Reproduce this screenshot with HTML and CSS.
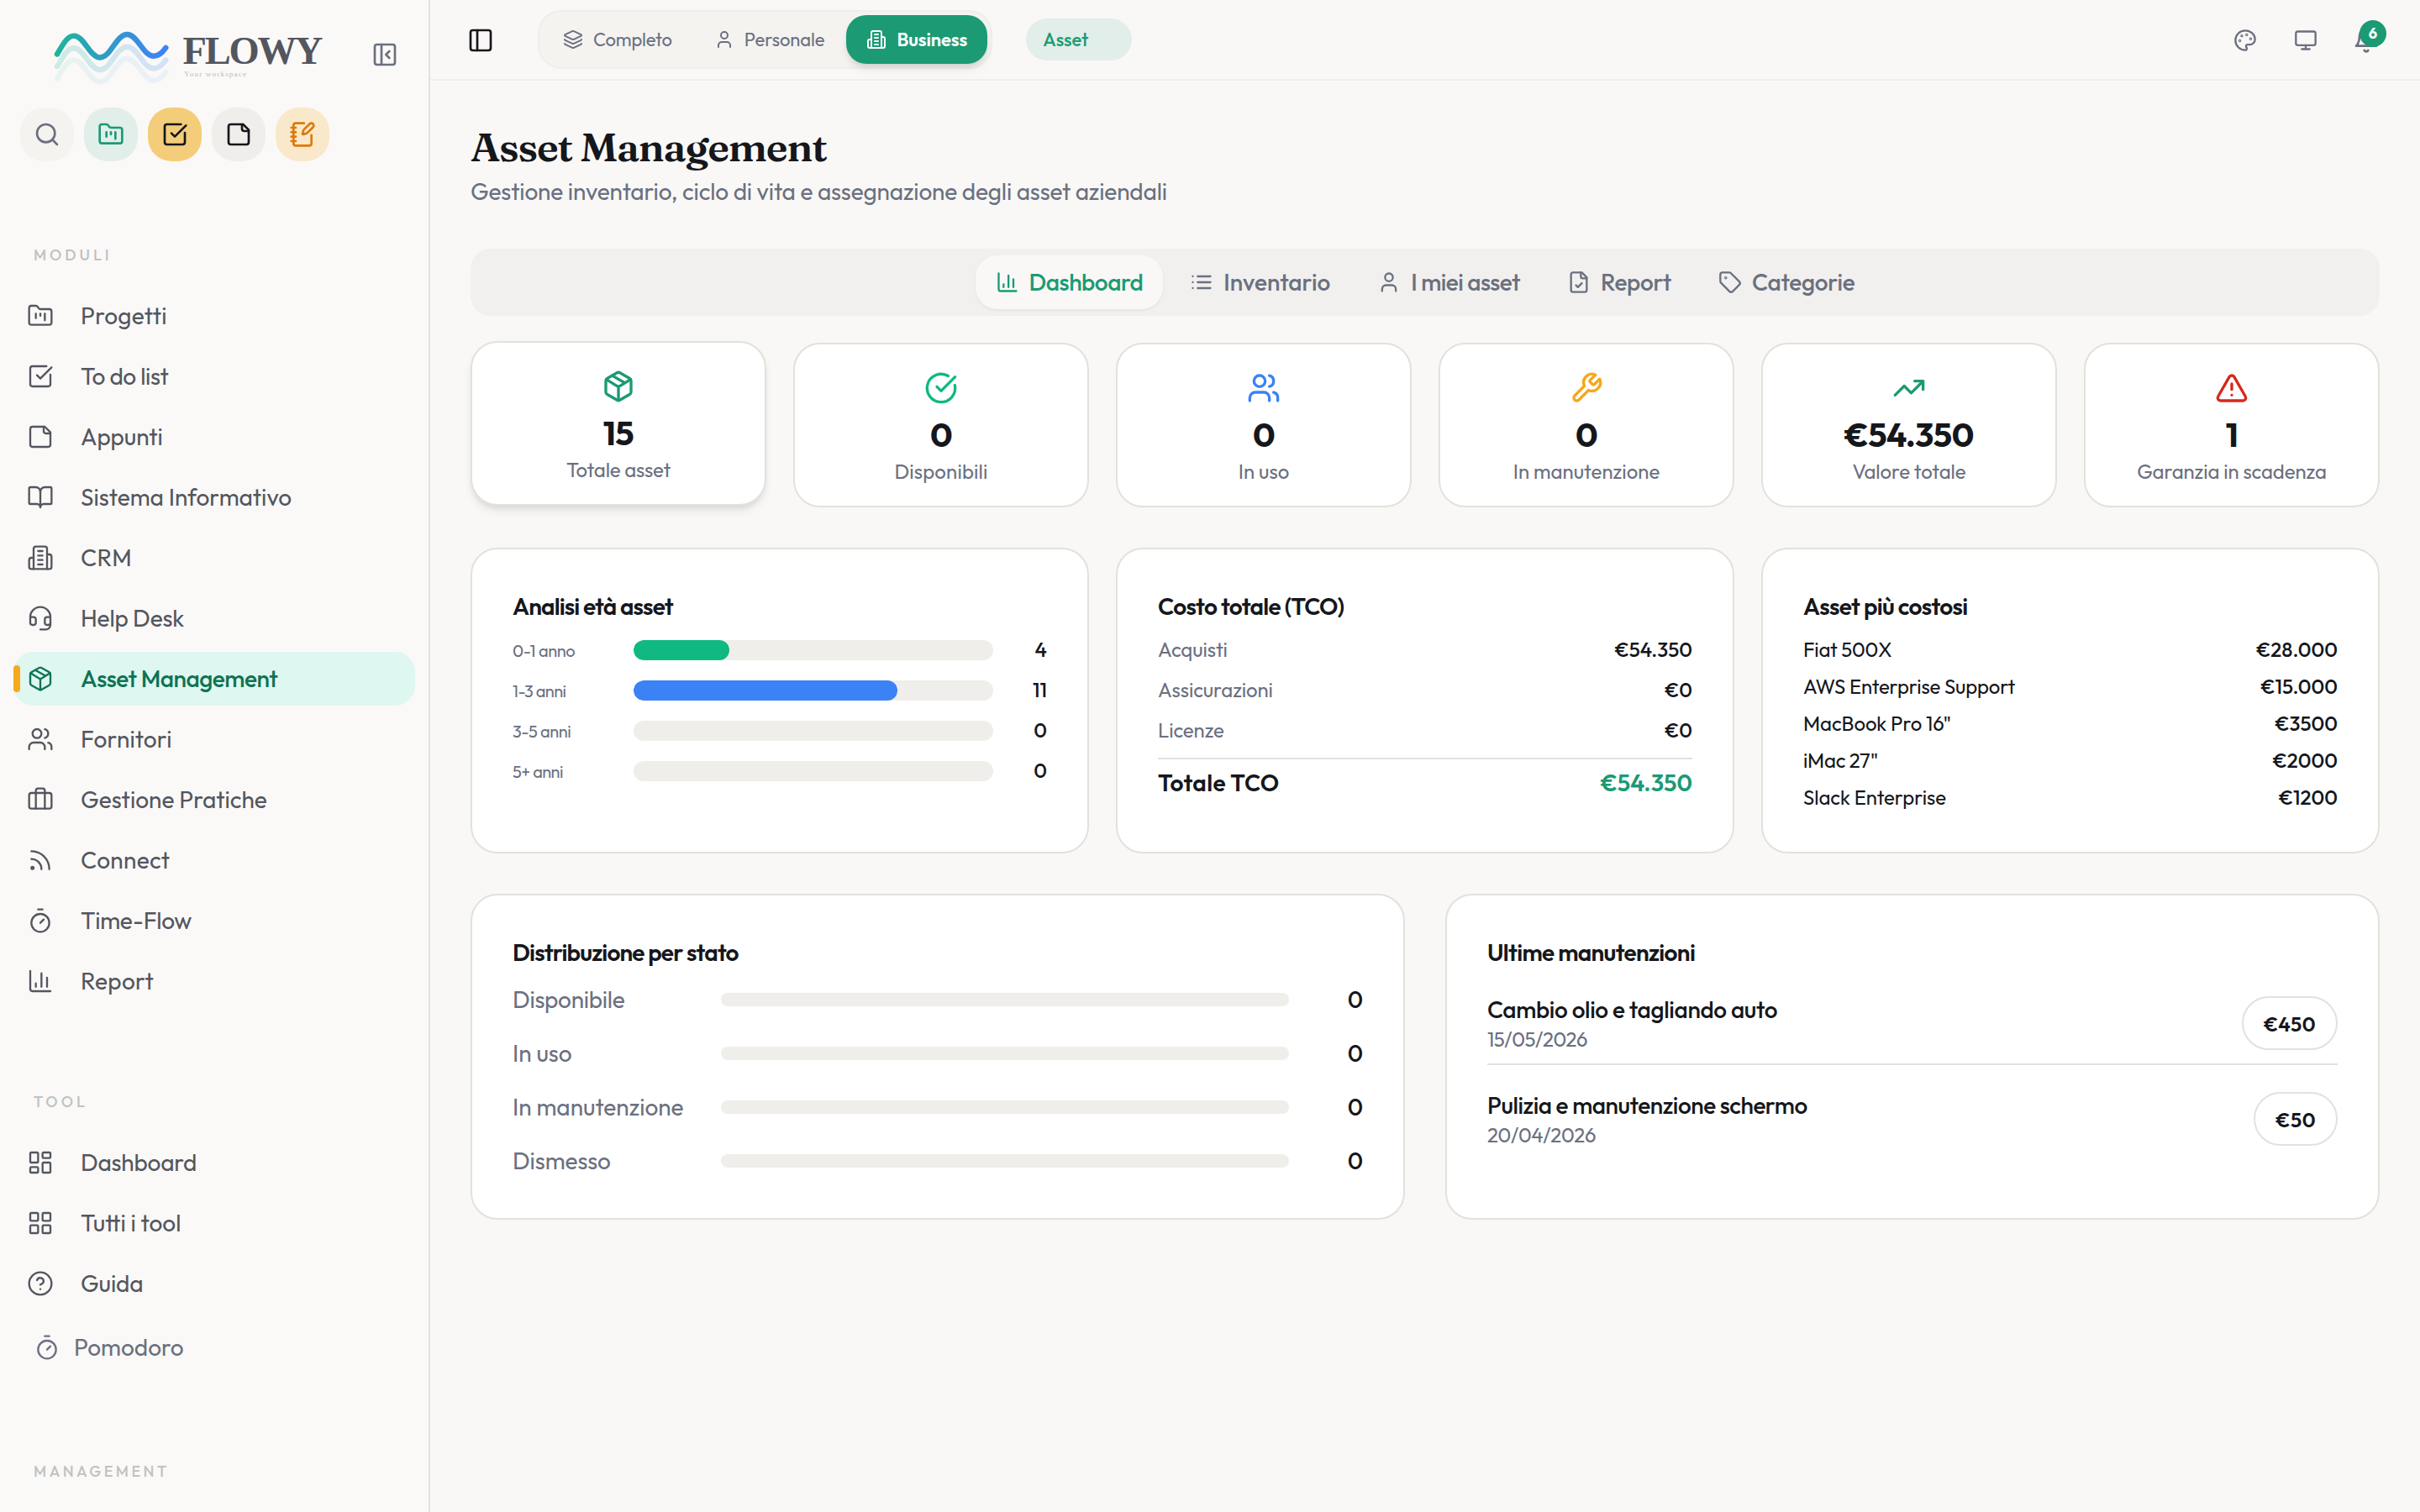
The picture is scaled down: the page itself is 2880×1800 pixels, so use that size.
FILE: index.html
```html
<!DOCTYPE html>
<html lang="it">
<head>
<meta charset="utf-8">
<title>Flowy – Asset Management</title>
<link rel="stylesheet" href="styles.css">
</head>
<body>
<svg class="sprite" aria-hidden="true">
  <symbol id="folder" viewBox="0 0 24 24"><path d="M4 20h16a2 2 0 0 0 2-2V8a2 2 0 0 0-2-2h-7.93a2 2 0 0 1-1.66-.9l-.82-1.2A2 2 0 0 0 7.93 3H4a2 2 0 0 0-2 2v13c0 1.1.9 2 2 2Z"/><path d="M8 10v4M12 10v2M16 10v6"/></symbol>
  <symbol id="check-square" viewBox="0 0 24 24"><path d="M21 10.5V19a2 2 0 0 1-2 2H5a2 2 0 0 1-2-2V5a2 2 0 0 1 2-2h12.5"/><path d="m9 11 3 3L22 4"/></symbol>
  <symbol id="note" viewBox="0 0 24 24"><path d="M16 3H5a2 2 0 0 0-2 2v14a2 2 0 0 0 2 2h14a2 2 0 0 0 2-2V8Z"/><path d="M15 3v4a2 2 0 0 0 2 2h4"/></symbol>
  <symbol id="book" viewBox="0 0 24 24"><path d="M12 7v14"/><path d="M3 18a1 1 0 0 1-1-1V4a1 1 0 0 1 1-1h5a4 4 0 0 1 4 4 4 4 0 0 1 4-4h5a1 1 0 0 1 1 1v13a1 1 0 0 1-1 1h-6a3 3 0 0 0-3 3 3 3 0 0 0-3-3z"/></symbol>
  <symbol id="building" viewBox="0 0 24 24"><path d="M6 22V4a2 2 0 0 1 2-2h8a2 2 0 0 1 2 2v18Z"/><path d="M6 12H4a2 2 0 0 0-2 2v6a2 2 0 0 0 2 2h2M18 9h2a2 2 0 0 1 2 2v9a2 2 0 0 1-2 2h-2M10 6h4M10 10h4M10 14h4M10 18h4"/></symbol>
  <symbol id="headset" viewBox="0 0 24 24"><path d="M3 11h3a2 2 0 0 1 2 2v3a2 2 0 0 1-2 2H5a2 2 0 0 1-2-2v-5Zm0 0a9 9 0 1 1 18 0m0 0v5a2 2 0 0 1-2 2h-1a2 2 0 0 1-2-2v-3a2 2 0 0 1 2-2h3Z"/><path d="M21 16v2a4 4 0 0 1-4 4h-5"/></symbol>
  <symbol id="package" viewBox="0 0 24 24"><path d="M11 21.73a2 2 0 0 0 2 0l7-4A2 2 0 0 0 21 16V8a2 2 0 0 0-1-1.73l-7-4a2 2 0 0 0-2 0l-7 4A2 2 0 0 0 3 8v8a2 2 0 0 0 1 1.73z"/><path d="M12 22V12M3.3 7l7.703 4.734a2 2 0 0 0 1.994 0L20.7 7M7.5 4.27l9 5.15"/></symbol>
  <symbol id="users" viewBox="0 0 24 24"><path d="M16 21v-2a4 4 0 0 0-4-4H6a4 4 0 0 0-4 4v2"/><circle cx="9" cy="7" r="4"/><path d="M22 21v-2a4 4 0 0 0-3-3.87M16 3.13a4 4 0 0 1 0 7.75"/></symbol>
  <symbol id="briefcase" viewBox="0 0 24 24"><path d="M16 20V4a2 2 0 0 0-2-2h-4a2 2 0 0 0-2 2v16"/><rect x="2" y="6" width="20" height="14" rx="2"/></symbol>
  <symbol id="rss" viewBox="0 0 24 24"><path d="M4 11a9 9 0 0 1 9 9M4 4a16 16 0 0 1 16 16"/><circle cx="5" cy="19" r="1"/></symbol>
  <symbol id="timer" viewBox="0 0 24 24"><path d="M10 2h4M12 14l3-3"/><circle cx="12" cy="14" r="8"/></symbol>
  <symbol id="chart" viewBox="0 0 24 24"><path d="M3 3v16a2 2 0 0 0 2 2h16M18 17V9M13 17V5M8 17v-3"/></symbol>
  <symbol id="dashboard" viewBox="0 0 24 24"><rect x="3" y="3" width="7" height="9" rx="1"/><rect x="14" y="3" width="7" height="5" rx="1"/><rect x="14" y="12" width="7" height="9" rx="1"/><rect x="3" y="16" width="7" height="5" rx="1"/></symbol>
  <symbol id="grid" viewBox="0 0 24 24"><rect x="3" y="3" width="7" height="7" rx="1"/><rect x="14" y="3" width="7" height="7" rx="1"/><rect x="14" y="14" width="7" height="7" rx="1"/><rect x="3" y="14" width="7" height="7" rx="1"/></symbol>
  <symbol id="help" viewBox="0 0 24 24"><circle cx="12" cy="12" r="10"/><path d="M9.09 9a3 3 0 0 1 5.83 1c0 2-3 3-3 3M12 17h.01"/></symbol>
  <symbol id="search" viewBox="0 0 24 24"><circle cx="11" cy="11" r="8"/><path d="m21 21-4.3-4.3"/></symbol>
  <symbol id="notebook" viewBox="0 0 24 24"><path d="M13.4 2H6a2 2 0 0 0-2 2v16a2 2 0 0 0 2 2h12a2 2 0 0 0 2-2v-7.4M2 6h4M2 10h4M2 14h4M2 18h4"/><path d="M21.378 5.626a1 1 0 1 0-3.004-3.004l-5.01 5.012a2 2 0 0 0-.506.854l-.837 2.87a.5.5 0 0 0 .62.62l2.87-.837a2 2 0 0 0 .854-.506z"/></symbol>
  <symbol id="panel-close" viewBox="0 0 24 24"><rect x="3" y="3" width="18" height="18" rx="2"/><path d="M9 3v18M16 15l-3-3 3-3"/></symbol>
  <symbol id="panel" viewBox="0 0 24 24"><rect x="3" y="3" width="18" height="18" rx="2"/><path d="M9 3v18"/></symbol>
  <symbol id="layers" viewBox="0 0 24 24"><path d="M12.83 2.18a2 2 0 0 0-1.66 0L2.6 6.08a1 1 0 0 0 0 1.83l8.58 3.91a2 2 0 0 0 1.66 0l8.58-3.9a1 1 0 0 0 0-1.83z"/><path d="M2 12a1 1 0 0 0 .58.91l8.6 3.91a2 2 0 0 0 1.65 0l8.58-3.9A1 1 0 0 0 22 12M2 17a1 1 0 0 0 .58.91l8.6 3.91a2 2 0 0 0 1.65 0l8.58-3.9A1 1 0 0 0 22 17"/></symbol>
  <symbol id="user" viewBox="0 0 24 24"><path d="M19 21v-2a4 4 0 0 0-4-4H9a4 4 0 0 0-4 4v2"/><circle cx="12" cy="7" r="4"/></symbol>
  <symbol id="palette" viewBox="0 0 24 24"><circle cx="13.5" cy="6.5" r=".5"/><circle cx="17.5" cy="10.5" r=".5"/><circle cx="8.5" cy="7.5" r=".5"/><circle cx="6.5" cy="12.5" r=".5"/><path d="M12 2C6.5 2 2 6.5 2 12s4.5 10 10 10c.926 0 1.648-.746 1.648-1.688 0-.437-.18-.835-.437-1.125-.29-.289-.438-.652-.438-1.125a1.64 1.64 0 0 1 1.668-1.668h1.996c3.051 0 5.555-2.503 5.555-5.554C21.965 6.012 17.461 2 12 2z"/></symbol>
  <symbol id="monitor" viewBox="0 0 24 24"><rect x="2" y="3" width="20" height="14" rx="2"/><path d="M8 21h8M12 17v4"/></symbol>
  <symbol id="bell" viewBox="0 0 24 24"><path d="M6 8a6 6 0 0 1 12 0c0 7 3 9 3 9H3s3-2 3-9M10.3 21a1.94 1.94 0 0 0 3.4 0"/></symbol>
  <symbol id="list" viewBox="0 0 24 24"><path d="M3 12h.01M3 18h.01M3 6h.01M8 12h13M8 18h13M8 6h13"/></symbol>
  <symbol id="file-check" viewBox="0 0 24 24"><path d="M15 2H6a2 2 0 0 0-2 2v16a2 2 0 0 0 2 2h12a2 2 0 0 0 2-2V7Z"/><path d="M14 2v4a2 2 0 0 0 2 2h4M9 15l2 2 4-4"/></symbol>
  <symbol id="tag" viewBox="0 0 24 24"><path d="M12.586 2.586A2 2 0 0 0 11.172 2H4a2 2 0 0 0-2 2v7.172a2 2 0 0 0 .586 1.414l8.704 8.704a2.426 2.426 0 0 0 3.42 0l6.58-6.58a2.426 2.426 0 0 0 0-3.42z"/><circle cx="7.5" cy="7.5" r=".5"/></symbol>
  <symbol id="check-circle" viewBox="0 0 24 24"><path d="M21.801 10A10 10 0 1 1 17 3.335"/><path d="m9 11 3 3L22 4"/></symbol>
  <symbol id="wrench" viewBox="0 0 24 24"><path d="M14.7 6.3a1 1 0 0 0 0 1.4l1.6 1.6a1 1 0 0 0 1.4 0l3.77-3.77a6 6 0 0 1-7.94 7.94l-6.91 6.91a2.12 2.12 0 0 1-3-3l6.91-6.91a6 6 0 0 1 7.94-7.94l-3.76 3.76z"/></symbol>
  <symbol id="trending" viewBox="0 0 24 24"><path d="M22 7l-8.5 8.5-5-5L2 17M16 7h6v6"/></symbol>
  <symbol id="alert" viewBox="0 0 24 24"><path d="m21.73 18-8-14a2 2 0 0 0-3.48 0l-8 14A2 2 0 0 0 4 21h16a2 2 0 0 0 1.73-3M12 9v4M12 17h.01"/></symbol>
</svg>

<div class="app">
  <aside class="sidebar">
    <div class="brand">
      <svg class="logo" viewBox="0 0 330 76" role="img" aria-label="Flowy">
        <defs>
          <linearGradient id="wave" gradientUnits="userSpaceOnUse" x1="4" y1="0" x2="140" y2="0">
            <stop offset="0" stop-color="#1fb59a"/><stop offset="1" stop-color="#4080fa"/>
          </linearGradient>
          <path id="wave-line" d="M8 32.5C15 21 20 10.6 28 10.6C40 10.6 47 36.5 59 36.5C72 36.5 78 9 91.5 9C104 9 110 34.8 123 34.8C129 34.8 134 29.5 137.3 24.8"/>
        </defs>
        <g class="waves">
          <use href="#wave-line" y="29" opacity=".08"/>
          <use href="#wave-line" y="14.7" opacity=".2"/>
          <use href="#wave-line"/>
        </g>
        <text class="logo-name" x="157.5" y="44">FLOWY</text>
        <text class="logo-tag" x="159" y="59">Your workspace</text>
      </svg>
      <svg class="icon i32"><use href="#panel-close"/></svg>
    </div>
    <div class="quick">
      <span class="quick-btn q-search"><svg class="icon i32"><use href="#search"/></svg></span>
      <span class="quick-btn q-projects"><svg class="icon i32"><use href="#folder"/></svg></span>
      <span class="quick-btn q-todo"><svg class="icon i32"><use href="#check-square"/></svg></span>
      <span class="quick-btn q-notes"><svg class="icon i32"><use href="#note"/></svg></span>
      <span class="quick-btn q-journal"><svg class="icon i32"><use href="#notebook"/></svg></span>
    </div>
    <div class="nav-label">MODULI</div>
    <nav class="nav">
      <a class="nav-item wide-2"><svg class="icon i32"><use href="#folder"/></svg><span>Progetti</span></a>
      <a class="nav-item tight-4"><svg class="icon i32"><use href="#check-square"/></svg><span>To do list</span></a>
      <a class="nav-item tight-1"><svg class="icon i32"><use href="#note"/></svg><span>Appunti</span></a>
      <a class="nav-item"><svg class="icon i32"><use href="#book"/></svg><span>Sistema Informativo</span></a>
      <a class="nav-item wide-3"><svg class="icon i32"><use href="#building"/></svg><span>CRM</span></a>
      <a class="nav-item tight-2"><svg class="icon i32"><use href="#headset"/></svg><span>Help Desk</span></a>
      <a class="nav-item active tight-5"><svg class="icon i32"><use href="#package"/></svg><span>Asset Management</span></a>
      <a class="nav-item wide-1"><svg class="icon i32"><use href="#users"/></svg><span>Fornitori</span></a>
      <a class="nav-item"><svg class="icon i32"><use href="#briefcase"/></svg><span>Gestione Pratiche</span></a>
      <a class="nav-item wide-3"><svg class="icon i32"><use href="#rss"/></svg><span>Connect</span></a>
      <a class="nav-item tight-3"><svg class="icon i32"><use href="#timer"/></svg><span>Time-Flow</span></a>
      <a class="nav-item wide-2"><svg class="icon i32"><use href="#chart"/></svg><span>Report</span></a>
    </nav>
    <div class="nav-label">TOOL</div>
    <nav class="nav">
      <a class="nav-item tight-2"><svg class="icon i32"><use href="#dashboard"/></svg><span>Dashboard</span></a>
      <a class="nav-item"><svg class="icon i32"><use href="#grid"/></svg><span>Tutti i tool</span></a>
      <a class="nav-item tight-1"><svg class="icon i32"><use href="#help"/></svg><span>Guida</span></a>
      <a class="nav-item compact"><svg class="icon i32"><use href="#timer"/></svg><span>Pomodoro</span></a>
    </nav>
    <div class="nav-label last">MANAGEMENT</div>
  </aside>

  <div class="page">
    <header class="topbar">
      <svg class="icon i32 toggle"><use href="#panel"/></svg>
      <div class="modes">
        <span class="mode tight-2"><svg class="icon i24"><use href="#layers"/></svg><span>Completo</span></span>
        <span class="mode tight-1"><svg class="icon i24"><use href="#user"/></svg><span>Personale</span></span>
        <span class="mode on tight-1"><svg class="icon i24"><use href="#building"/></svg><span>Business</span></span>
      </div>
      <span class="crumb">Asset</span>
      <div class="actions">
        <svg class="icon i28"><use href="#palette"/></svg>
        <svg class="icon i28"><use href="#monitor"/></svg>
        <span class="bell"><svg class="icon i32"><use href="#bell"/></svg><span class="badge">6</span></span>
      </div>
    </header>

    <main class="content">
      <h1>Asset Management</h1>
      <p class="subtitle">Gestione inventario, ciclo di vita e assegnazione degli asset aziendali</p>

      <div class="tabs">
        <span class="tab on tight-5"><svg class="icon i28"><use href="#chart"/></svg><span>Dashboard</span></span>
        <span class="tab"><svg class="icon i28"><use href="#list"/></svg><span>Inventario</span></span>
        <span class="tab tight-6"><svg class="icon i28"><use href="#user"/></svg><span>I miei asset</span></span>
        <span class="tab tight-3"><svg class="icon i28"><use href="#file-check"/></svg><span>Report</span></span>
        <span class="tab tight-3"><svg class="icon i28"><use href="#tag"/></svg><span>Categorie</span></span>
      </div>

      <section class="stats">
        <div class="stat raised"><svg class="icon i40 c-brand"><use href="#package"/></svg><strong>15</strong><span class="tight-2">Totale asset</span></div>
        <div class="stat"><svg class="icon i40 c-green"><use href="#check-circle"/></svg><strong>0</strong><span class="wide-1">Disponibili</span></div>
        <div class="stat"><svg class="icon i40 c-blue"><use href="#users"/></svg><strong>0</strong><span>In uso</span></div>
        <div class="stat"><svg class="icon i40 c-amber"><use href="#wrench"/></svg><strong>0</strong><span>In manutenzione</span></div>
        <div class="stat"><svg class="icon i40 c-brand"><use href="#trending"/></svg><strong>€54.350</strong><span class="tight-1">Valore totale</span></div>
        <div class="stat"><svg class="icon i40 c-red"><use href="#alert"/></svg><strong>1</strong><span class="tight-1">Garanzia in scadenza</span></div>
      </section>

      <section class="cards three">
        <div class="card">
          <h2 class="tighter">Analisi età asset</h2>
          <div class="age-row"><span class="label tight-4">0-1 anno</span><span class="track"><span class="fill f-green" style="width:26.67%"></span></span><b>4</b></div>
          <div class="age-row"><span class="label tight-6">1-3 anni</span><span class="track"><span class="fill f-blue" style="width:73.33%"></span></span><b>11</b></div>
          <div class="age-row"><span class="label tight-5">3-5 anni</span><span class="track"></span><b>0</b></div>
          <div class="age-row"><span class="label tight-6">5+ anni</span><span class="track"></span><b>0</b></div>
        </div>
        <div class="card">
          <h2>Costo totale (TCO)</h2>
          <div class="cost-row"><span>Acquisti</span><b>€54.350</b></div>
          <div class="cost-row"><span>Assicurazioni</span><b>€0</b></div>
          <div class="cost-row"><span>Licenze</span><b>€0</b></div>
          <div class="cost-total"><span class="wide-3">Totale TCO</span><b>€54.350</b></div>
        </div>
        <div class="card">
          <h2>Asset più costosi</h2>
          <div class="top-list">
            <div class="top-row"><span class="tight-3">Fiat 500X</span><b>€28.000</b></div>
            <div class="top-row"><span class="tight-2">AWS Enterprise Support</span><b>€15.000</b></div>
            <div class="top-row"><span class="tight-1">MacBook Pro 16"</span><b>€3500</b></div>
            <div class="top-row"><span class="tight-3">iMac 27"</span><b>€2000</b></div>
            <div class="top-row"><span class="tight-1">Slack Enterprise</span><b>€1200</b></div>
          </div>
        </div>
      </section>

      <section class="cards two">
        <div class="card">
          <h2 class="tighter">Distribuzione per stato</h2>
          <div class="state-list">
            <div class="state-row"><span class="label tight-3">Disponibile</span><span class="track"></span><b>0</b></div>
            <div class="state-row"><span class="label">In uso</span><span class="track"></span><b>0</b></div>
            <div class="state-row"><span class="label">In manutenzione</span><span class="track"></span><b>0</b></div>
            <div class="state-row"><span class="label tight-1">Dismesso</span><span class="track"></span><b>0</b></div>
          </div>
        </div>
        <div class="card">
          <h2>Ultime manutenzioni</h2>
          <div class="job"><div><p class="job-name tight-4">Cambio olio e tagliando auto</p><p class="job-date tight-5">15/05/2026</p></div><span class="price">€450</span></div>
          <div class="job"><div><p class="job-name tight-5">Pulizia e manutenzione schermo</p><p class="job-date tight-4">20/04/2026</p></div><span class="price">€50</span></div>
        </div>
      </section>
    </main>
  </div>
</div>
</body>
</html>
```
FILE: styles.css
```css
* { box-sizing: border-box; }

body {
  margin: 0;
  background: #f9f8f6;
  color: #15171c;
  font-family: Outfit, Lato, sans-serif;
  font-size: 28px;
  line-height: 40px;
}

h1, h2, p { margin: 0; }
a { color: inherit; text-decoration: none; }
b { font-weight: 500; }

/* Tracking steps */
.tight-1 { letter-spacing: -.1px; }
.tight-2 { letter-spacing: -.2px; }
.tight-3 { letter-spacing: -.28px; }
.tight-4 { letter-spacing: -.37px; }
.tight-5 { letter-spacing: -.48px; }
.tight-6 { letter-spacing: -.56px; }
.wide-1 { letter-spacing: .15px; }
.wide-2 { letter-spacing: .25px; }
.wide-3 { letter-spacing: .32px; }

.sprite { display: none; }

.icon {
  flex: none;
  display: block;
  fill: none;
  stroke: currentColor;
  stroke-width: 2;
  stroke-linecap: round;
  stroke-linejoin: round;
}
.i24 { width: 24px; height: 24px; }
.i28 { width: 28px; height: 28px; }
.i32 { width: 32px; height: 32px; }
.i40 { width: 40px; height: 40px; }

.c-brand { color: #1b9a74; }
.c-green { color: #10b981; }
.c-blue { color: #3b82f6; }
.c-amber { color: #f5a81c; }
.c-red { color: #d6281c; }

.app {
  display: flex;
  height: 1800px;
  overflow: hidden;
}

/* Sidebar */
.sidebar {
  flex: none;
  width: 512px;
  border-right: 2px solid #e3e1dc;
  background: #faf9f7;
  color: #53565f;
}

.brand {
  display: flex;
  align-items: center;
  justify-content: space-between;
  height: 128px;
  padding: 0 36px 0 60px;
  color: #6b7080;
}
.brand .icon { margin-top: 1px; }
.logo { width: 330px; height: 76px; margin-top: 12px; }
.waves {
  fill: none;
  stroke: url(#wave);
  stroke-width: 6.4;
  stroke-linecap: round;
}
.logo-name {
  font: 700 46.5px "Liberation Serif", serif;
  letter-spacing: -2.2px;
  fill: #53565f;
}
.logo-tag {
  font: 400 9px "Liberation Serif", serif;
  letter-spacing: 1.2px;
  fill: #bcbdc1;
}

.quick {
  display: flex;
  gap: 12px;
  padding-left: 24px;
}
.quick-btn {
  display: flex;
  align-items: center;
  justify-content: center;
  width: 64px;
  height: 64px;
  border-radius: 28px;
}
.q-search { background: #f4f3ef; color: #6b7080; }
.q-projects { background: #e1eee9; color: #1b9a74; }
.q-todo { background: #f4cd7a; color: #15171c; }
.q-notes { background: #efeeea; color: #15171c; }
.q-journal { background: #fae8cb; color: #dd7a07; }

.nav-label {
  margin: 96px 0 24px 40px;
  color: #bfc1c4;
  font-size: 18px;
  font-weight: 500;
  line-height: 32px;
  letter-spacing: 3.95px;
}
.nav-label.last { margin-top: 100px; letter-spacing: 3.5px; }

.nav {
  display: flex;
  flex-direction: column;
  gap: 8px;
  padding: 0 16px;
}
.nav-item {
  position: relative;
  display: flex;
  align-items: center;
  gap: 32px;
  height: 64px;
  padding-left: 16px;
  border-radius: 24px;
}
.nav-item .icon { stroke-width: 1.75; }
.nav-item.active {
  background: #def7f0;
  color: #0f7355;
  font-weight: 500;
}
.nav-item.active::before {
  content: "";
  position: absolute;
  left: 0;
  top: 16px;
  width: 8px;
  height: 32px;
  border-radius: 4px;
  background: #f6a91c;
}
.nav-item.compact {
  gap: 16px;
  margin-top: 4px;
  padding-left: 24px;
  color: #6b7080;
}

/* Top bar */
.page { flex: 1; min-width: 0; }

.topbar {
  display: flex;
  align-items: center;
  height: 96px;
  padding: 0 48px 0 44px;
  border-bottom: 2px solid #efeeea;
}
.toggle { margin: 2px 52px 0 0; }
.modes {
  display: flex;
  gap: 2px;
  padding: 4px;
  border: 2px solid #efeeea;
  border-radius: 28px;
  background: #f4f3f0;
}
.mode {
  display: flex;
  align-items: center;
  gap: 12px;
  height: 58px;
  padding: 0 24px;
  border-radius: 24px;
  color: #6b7080;
  font-size: 22px;
}
.mode.on {
  background: #1b9a74;
  color: #fff;
  font-weight: 600;
  box-shadow: 0 8px 12px -2px rgba(0, 0, 0, .08), 0 4px 6px -2px rgba(0, 0, 0, .1);
}
.crumb {
  width: 126px;
  height: 50px;
  margin-left: 40px;
  padding-left: 20px;
  border-radius: 25px;
  background: #e1eee9;
  color: #1b9a74;
  font-size: 22px;
  font-weight: 500;
  line-height: 50px;
}
.actions {
  display: flex;
  align-items: center;
  gap: 44px;
  margin: 2px 0 0 auto;
  color: #6b7080;
}
.bell { position: relative; margin-left: -2px; }
.badge {
  position: absolute;
  left: 8px;
  top: -8px;
  width: 32px;
  height: 32px;
  border-radius: 50%;
  background: #1b9a74;
  color: #fff;
  font-size: 18px;
  font-weight: 700;
  line-height: 31px;
  text-align: center;
}

/* Content */
.content { padding: 48px; }

h1 {
  font: 600 48px/62px Fraunces, "Liberation Serif", serif;
  letter-spacing: -1.15px;
}
.subtitle {
  margin-top: 2px;
  color: #6b7080;
  letter-spacing: -.155px;
}

.tabs {
  display: flex;
  justify-content: center;
  gap: 8px;
  height: 80px;
  margin-top: 48px;
  padding: 8px;
  border-radius: 24px;
  background: #f1f0ee;
}
.tab {
  display: flex;
  align-items: center;
  gap: 12px;
  padding: 0 24px;
  border-radius: 26px;
  color: #6b7080;
  font-weight: 500;
}
.tab.on {
  background: #f9f8f6;
  color: #1b9a74;
  box-shadow: 0 2px 4px rgba(0, 0, 0, .05);
}

.stats {
  display: grid;
  grid-template-columns: repeat(6, 1fr);
  gap: 32px;
  margin-top: 32px;
}
.stat {
  display: flex;
  flex-direction: column;
  align-items: center;
  height: 196px;
  padding-top: 32px;
  border: 2px solid #e3e1dc;
  border-radius: 32px;
  background: #fff;
}
.stat.raised {
  transform: translateY(-2px);
  box-shadow: 0 8px 12px -2px rgba(0, 0, 0, .08), 0 4px 6px -2px rgba(0, 0, 0, .08);
}
.stat strong {
  margin-top: 11px;
  font-size: 40px;
  font-weight: 700;
  line-height: 48px;
  letter-spacing: -.6px;
}
.stat span {
  margin-top: 4px;
  color: #6b7080;
  font-size: 24px;
  line-height: 32px;
}

.cards { display: grid; margin-top: 48px; }
.three { grid-template-columns: repeat(3, 1fr); gap: 32px; }
.two { grid-template-columns: repeat(2, 1fr); gap: 48px; }
.card {
  padding: 48px;
  border: 2px solid #e3e1dc;
  border-radius: 32px;
  background: #fff;
}
h2 {
  margin-bottom: 16px;
  font-size: 28px;
  font-weight: 600;
  line-height: 40px;
  letter-spacing: -.7px;
}
h2.tighter { letter-spacing: -.86px; }

.track {
  flex: 1;
  overflow: hidden;
  border-radius: 12px;
  background: #efeeea;
}
.fill {
  display: block;
  height: 100%;
  border-radius: 12px;
}
.f-green { background: #10b981; }
.f-blue { background: #3b82f6; }

.age-row {
  display: flex;
  align-items: center;
  height: 32px;
  margin-bottom: 16px;
  font-size: 24px;
}
.age-row .label {
  width: 144px;
  padding-top: 1px;
  color: #6b7080;
  font-size: 20px;
}
.age-row .track { height: 24px; }
.age-row b {
  width: 64px;
  padding-bottom: 2px;
  text-align: right;
}

.cost-row {
  display: flex;
  justify-content: space-between;
  margin-bottom: 16px;
  padding-bottom: 2px;
  font-size: 24px;
  line-height: 30px;
}
.cost-row span { color: #6b7080; letter-spacing: -.1px; }
.cost-total {
  display: flex;
  justify-content: space-between;
  padding-top: 8px;
  border-top: 2px solid #e3e1dc;
  font-weight: 600;
}
.cost-total b { color: #1b9a74; font-weight: 600; }

.top-list { display: grid; gap: 12px; }
.top-row {
  display: flex;
  justify-content: space-between;
  padding-bottom: 2px;
  font-size: 24px;
  line-height: 30px;
}

.state-list { display: grid; gap: 24px; }
.state-row { display: flex; align-items: center; }
.state-row .label { width: 248px; color: #6b7080; }
.state-row .track { height: 16px; }
.state-row b { width: 88px; text-align: right; }

.job {
  display: flex;
  align-items: center;
  justify-content: space-between;
  padding: 12px 0;
}
.job + .job { margin-top: 16px; }
.job:not(:last-child) { border-bottom: 2px solid #e3e1dc; }
.job-name { font-weight: 500; }
.job-date {
  padding-bottom: 2px;
  color: #6b7080;
  font-size: 24px;
  line-height: 30px;
}
.price {
  height: 64px;
  padding: 0 24px;
  border: 2px solid #e3e1dc;
  border-radius: 32px;
  font-size: 24px;
  font-weight: 600;
  line-height: 62px;
  letter-spacing: .5px;
}
```
